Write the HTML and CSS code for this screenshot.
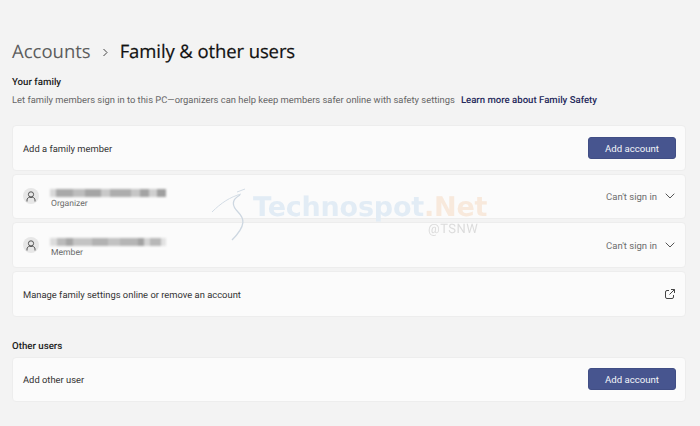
FILE: index.html
```html
<!DOCTYPE html>
<html lang="en">
<head>
<meta charset="utf-8">
<title>Family &amp; other users</title>
<link rel="stylesheet" href="styles.css">
</head>
<body>
<main class="page">
  <h1 class="crumbs">
    <span class="crumb-parent">Accounts</span>
    <svg class="crumb-sep" width="7" height="9" viewBox="0 0 7 9"><path d="M1.5 1l3.5 3.5L1.5 8" fill="none" stroke="#444" stroke-width="1"/></svg>
    <span class="crumb-current">Family &amp; other users</span>
  </h1>

  <h2 class="section-title">Your family</h2>
  <p class="section-desc"><span>Let family members sign in to this PC—organizers can help keep members safer online with safety settings</span><a class="link" href="#">Learn more about Family Safety</a></p>

  <div class="cards">
    <div class="card">
      <span class="label">Add a family member</span>
      <button class="btn">Add account</button>
    </div>
    <div class="card">
      <div class="user">
        <span class="avatar"><svg width="10" height="11" viewBox="0 0 10 11"><circle cx="5" cy="3.4" r="2.6" fill="none" stroke="#555" stroke-width="1"/><path d="M1 10.5V9c0-1.4 1.1-2.6 2.4-2.6h3.2C7.900 6.400 9 7.600 9 9v1.500" fill="none" stroke="#555" stroke-width="1"/></svg></span>
        <div class="user-text">
          <div class="redacted redacted-a"></div>
          <div class="role">Organizer</div>
        </div>
      </div>
      <div class="status"><span class="status-text">Can't sign in</span>
        <svg width="10" height="6" viewBox="0 0 10 6"><path d="M.7.7L5 5l4.300-4.300" fill="none" stroke="#555" stroke-width="1"/></svg></div>
    </div>
    <div class="card">
      <div class="user">
        <span class="avatar"><svg width="10" height="11" viewBox="0 0 10 11"><circle cx="5" cy="3.4" r="2.6" fill="none" stroke="#555" stroke-width="1"/><path d="M1 10.5V9c0-1.4 1.1-2.6 2.4-2.6h3.2C7.900 6.400 9 7.600 9 9v1.500" fill="none" stroke="#555" stroke-width="1"/></svg></span>
        <div class="user-text">
          <div class="redacted redacted-b"></div>
          <div class="role">Member</div>
        </div>
      </div>
      <div class="status"><span class="status-text">Can't sign in</span>
        <svg width="10" height="6" viewBox="0 0 10 6"><path d="M.7.7L5 5l4.300-4.300" fill="none" stroke="#555" stroke-width="1"/></svg></div>
    </div>
    <div class="card">
      <span class="label">Manage family settings online or remove an account</span>
      <svg class="ext" width="10" height="10" viewBox="0 0 10 10"><path d="M4 1.500H2a1.500 1.500 0 0 0-1.500 1.500v5A1.500 1.500 0 0 0 2 9.500h5A1.500 1.500 0 0 0 8.500 8V6M6 .5h3.500V4M9.500.5L4.500 5.500" fill="none" stroke="#444" stroke-width="1"/></svg>
    </div>
  </div>

  <h2 class="section-title other">Other users</h2>
  <div class="card">
    <span class="label">Add other user</span>
    <button class="btn">Add account</button>
  </div>
</main>

<div class="watermark">
  <svg class="wm-logo" width="38" height="54" viewBox="0 0 38 54"><path d="M0 25C9 16 18 10 29 7M25 5l8-3" fill="none" stroke="#d3dce5" stroke-width="1"/><path d="M28 8C19 13 20 19 26 25c6 6 9 13-6 28" fill="none" stroke="#cdd7e1" stroke-width="1.300"/></svg>
  <span class="wm-name"><span class="wm-blue">Technospot</span><span class="wm-orange">.Net</span></span>
  <span class="wm-tag">@TSNW</span>
</div>
</body>
</html>
```

FILE: styles.css
```css
* { box-sizing: border-box; }

html, body { margin: 0; height: 100%; }

body {
  position: relative;
  width: 700px;
  height: 426px;
  overflow: hidden;
  background: #f3f3f3;
  color: #1b1b1b;
  font-family: "Roboto", "Open Sans", sans-serif;
  text-rendering: geometricPrecision;
}

.page { padding: 39px 14px 0 12px; }

.crumbs {
  display: flex;
  align-items: center;
  height: 26px;
  margin: 0;
  font-family: "Open Sans", sans-serif;
  font-size: 18.500px;
  font-weight: 500;
  line-height: 26px;
}

.crumb-parent { color: #5d5d5d; }
.crumb-sep { margin: 1px 11px 0 11px; }
.crumb-current { color: #111; letter-spacing: -.1px; -webkit-text-stroke: .2px #111; }

.section-title {
  margin: 11px 0 0;
  font-size: 9.700px;
  font-weight: 500;
  line-height: 14px;
  color: #1b1b1b;
}

.section-title.other { margin: 23px 0 3px; }

.section-desc {
  display: flex;
  gap: 6px;
  margin: 4px 0 17px;
  font-size: 9.400px;
  line-height: 14px;
  color: #666;
  white-space: nowrap;
}

.link { color: #262a5c; font-size: 9.600px; font-weight: 500; text-decoration: none; }

.cards { display: flex; flex-direction: column; gap: 3px; }

.card {
  display: flex;
  align-items: center;
  justify-content: space-between;
  height: 45.670px;
  padding: 0 9px 0 10px;
  background: #fbfbfb;
  border: 1px solid #ededed;
  border-radius: 4px;
}

.label { padding-top: 3px; font-size: 9.400px; color: #333; }

.btn {
  width: 88px;
  height: 22px;
  padding: 1px 0 0;
  background: #47558f;
  border: 1px solid #414e85;
  border-radius: 3px;
  color: #f4f5fa;
  font: inherit;
  font-size: 9.600px;
}

.user { display: flex; align-items: center; gap: 12px; }

.avatar {
  display: flex;
  align-items: center;
  justify-content: center;
  width: 16px;
  height: 16px;
  border-radius: 50%;
  background: #e7e7e7;
}

.user-text { display: flex; flex-direction: column; gap: 1px; margin-top: 7px; }

.redacted {
  width: 116px;
  height: 8px;
  margin-left: -1px;
  filter: blur(.8px);
}

.redacted-a {
  background: linear-gradient(90deg, #d8d8d8 0 5%, #a9a9a9 5% 20%, #bdbdbd 20% 30%, #a5a5a5 30% 44%, #c9c9c9 44% 52%, #adadad 52% 70%, #c6c6c6 70% 78%, #a3a3a3 78% 85%, #cfcfcf 85% 92%, #9f9f9f 92% 100%);
}

.redacted-b {
  background: linear-gradient(90deg, #dcdcdc 0 6%, #bbb 6% 14%, #a6a6a6 14% 20%, #c4c4c4 20% 36%, #b2b2b2 36% 50%, #c2c2c2 50% 60%, #b5b5b5 60% 76%, #a2a2a2 76% 81%, #d4d4d4 81% 86%, #b8b8b8 86% 96%, #e2e2e2 96% 100%);
}

.role { font-size: 8.600px; line-height: 12px; color: #6b6b6b; }

.status { display: flex; align-items: center; gap: 8px; margin-right: 1px; }
.status-text { padding-top: 3px; font-size: 9.500px; color: #6e6e6e; }
.ext { margin-right: 1px; }

.watermark {
  position: absolute;
  left: 212px;
  top: 187px;
  width: 280px;
  height: 54px;
  filter: blur(.4px);
  pointer-events: none;
}

.wm-logo { position: absolute; left: 0; top: 0; }

.wm-name {
  position: absolute;
  left: 41px;
  top: 5px;
  font-family: "DejaVu Sans", sans-serif;
  font-size: 27px;
  font-weight: 700;
  line-height: 32px;
  letter-spacing: -.2px;
  white-space: nowrap;
}

.wm-blue { color: #e2ecf5; }
.wm-orange { color: #f8e9dc; }

.wm-tag {
  position: absolute;
  left: 216px;
  top: 35px;
  font-size: 13px;
  letter-spacing: .5px;
  color: #dcdcdc;
}
```
